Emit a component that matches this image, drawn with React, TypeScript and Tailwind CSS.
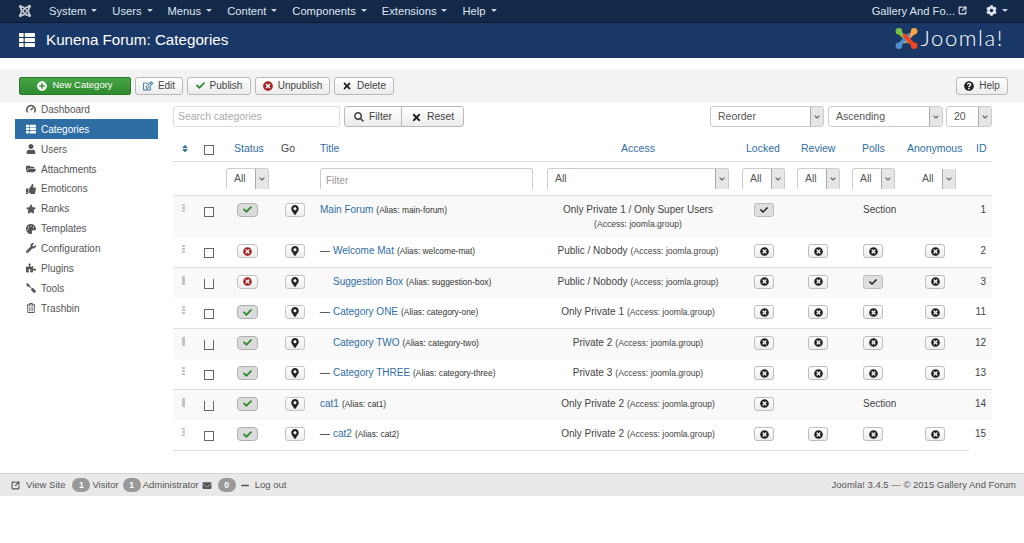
import React from "react";
import {
  FaJoomla,
  FaThList,
  FaRegEdit,
  FaCheck,
  FaTimesCircle,
  FaTimes,
  FaPlusCircle,
  FaSearch,
  FaQuestionCircle,
  FaCog,
  FaUser,
  FaFolderOpen,
  FaThumbsUp,
  FaStar,
  FaPalette,
  FaWrench,
  FaPuzzlePiece,
  FaScrewdriver,
  FaRegTrashAlt,
  FaSort,
  FaMapMarkerAlt,
  FaEnvelope,
  FaMinus,
  FaChevronDown,
} from "react-icons/fa";
import { Gauge, SquareArrowOutUpRight } from "lucide-react";

const menus = ["System", "Users", "Menus", "Content", "Components", "Extensions", "Help"];

const sideItems = [
  { name: "Categories", icon: FaThList, active: true },
  { name: "Users", icon: FaUser },
  { name: "Attachments", icon: FaFolderOpen },
  { name: "Emoticons", icon: FaThumbsUp },
  { name: "Ranks", icon: FaStar },
  { name: "Templates", icon: FaPalette },
  { name: "Configuration", icon: FaWrench },
  { name: "Plugins", icon: FaPuzzlePiece },
  { name: "Tools", icon: FaScrewdriver, flip: true },
  { name: "Trashbin", icon: FaRegTrashAlt },
];

type Row = {
  title: string;
  alias: string;
  dash?: boolean;
  indent?: boolean;
  status: "on" | "off";
  access: string;
  group: string;
  h: string;
  alt: boolean;
  clip?: boolean;
  section?: boolean;
  stack?: boolean;
  locked?: boolean;
  polls?: boolean;
  id: number;
  last?: boolean;
};

const rows: Row[] = [
  { title: "Main Forum", alias: "main-forum", status: "on", access: "Only Private 1 / Only Super Users", group: "joomla.group", h: "h-[42px]", alt: true, section: true, stack: true, locked: true, id: 1 },
  { title: "Welcome Mat", alias: "welcome-mat", dash: true, status: "off", access: "Public / Nobody", group: "joomla.group", h: "h-[30px]", alt: false, id: 2 },
  { title: "Suggestion Box", alias: "suggestion-box", indent: true, status: "off", access: "Public / Nobody", group: "joomla.group", h: "h-[31px]", alt: true, clip: true, polls: true, id: 3 },
  { title: "Category ONE", alias: "category-one", dash: true, status: "on", access: "Only Private 1", group: "joomla.group", h: "h-[30px]", alt: false, id: 11 },
  { title: "Category TWO", alias: "category-two", indent: true, status: "on", access: "Private 2", group: "joomla.group", h: "h-[31px]", alt: true, clip: true, id: 12 },
  { title: "Category THREE", alias: "category-three", dash: true, status: "on", access: "Private 3", group: "joomla.group", h: "h-[30px]", alt: false, id: 13 },
  { title: "cat1", alias: "cat1", status: "on", access: "Only Private 2", group: "joomla.group", h: "h-[31px]", alt: true, clip: true, section: true, id: 14 },
  { title: "cat2", alias: "cat2", dash: true, status: "on", access: "Only Private 2", group: "joomla.group", h: "h-[30px]", alt: false, last: true, id: 15 },
];

function JoomlaMark() {
  return (
    <svg viewBox="0 0 24 24" className="h-[23px] w-[23px]">
      <path d="M4 5 L14 15" stroke="#7ac143" strokeWidth="4.2" fill="none" strokeLinecap="round" />
      <circle cx="4" cy="4.5" r="3.4" fill="#7ac143" />
      <path d="M20 5 L10 15" stroke="#f9a541" strokeWidth="4.2" fill="none" strokeLinecap="round" />
      <circle cx="20" cy="4.5" r="3.4" fill="#f9a541" />
      <path d="M4 19.5 L14 9" stroke="#5091cd" strokeWidth="4.2" fill="none" strokeLinecap="round" />
      <circle cx="4" cy="19.5" r="3.4" fill="#5091cd" />
      <path d="M20 19.5 L10 9" stroke="#f44321" strokeWidth="4.2" fill="none" strokeLinecap="round" />
      <circle cx="20" cy="19.5" r="3.4" fill="#f44321" />
    </svg>
  );
}

function ToolButton({ icon, label, w }: { icon: React.ReactNode; label: string; w: string }) {
  return (
    <button className={`flex h-[18px] ${w} items-center justify-center gap-[5px] rounded-[3px] border border-[#b9b9b9] bg-gradient-to-b from-white to-[#ececec] text-[10px] text-[#444]`}>
      {icon}
      {label}
    </button>
  );
}

function Select({ label, w, arrow = "w-[13px]", open, flat }: { label: string; w: string; arrow?: string; open?: boolean; flat?: boolean }) {
  return (
    <div
      className={`flex ${w} overflow-hidden border-[#ccc] bg-white text-[10.5px] text-[#555] ${
        open ? "h-[21px] rounded-tl-[3px] rounded-tr-[3px] border-x border-t" : "h-[21px] rounded-[3px] border"
      } ${flat ? "border-l-transparent border-t-transparent" : ""}`}
    >
      <span className="flex flex-1 items-center pl-[7px] pt-px">{label}</span>
      <span className={`flex ${arrow} items-center justify-center border-l border-[#aaa] bg-[#e6e6e6]`}>
        <FaChevronDown className="h-[6px] w-[6px] text-[#555]" />
      </span>
    </div>
  );
}

function StatusButton({ kind }: { kind: Row["status"] }) {
  const bg = kind === "on" ? "bg-[#dcdcdc] border-[#b0b0b0]" : "bg-gradient-to-b from-white to-[#ececec] border-[#c0c0c0]";
  return (
    <span className={`flex h-[14px] w-[21px] items-center justify-center rounded-[4px] border ${bg}`}>
      {kind === "on" && <FaCheck className="h-[9px] w-[9px] text-[#2f8a2f]" />}
      {kind === "off" && <FaTimesCircle className="h-[9px] w-[9px] text-[#a52323]" />}
    </span>
  );
}

function SmallButton({ on }: { on?: boolean }) {
  return (
    <span
      className={`flex h-[14px] w-[20px] items-center justify-center rounded-[3px] border border-[#bdbdbd] ${
        on ? "bg-[#dedede]" : "bg-gradient-to-b from-white to-[#ececec]"
      }`}
    >
      {on ? <FaCheck className="h-[8px] w-[8px] text-[#222]" /> : <FaTimesCircle className="h-[9px] w-[9px] text-[#222]" />}
    </span>
  );
}

function Handle({ heavy }: { heavy?: boolean }) {
  return (
    <div className={`ml-[9px] mt-[8px] h-[9px] w-[3px] ${heavy ? "bg-[#c4c4c4]" : "bg-[repeating-linear-gradient(#c4c4c4_0_2px,transparent_2px,transparent_3px)]"}`} />
  );
}

export default function App() {
  return (
    <div className="min-h-[543px] bg-white font-['Liberation_Sans',Arial,sans-serif] text-[10px] text-[#555]">
      {/* top nav */}
      <nav className="flex h-[23px] items-center justify-between border-b border-[#0b1a30] bg-[#13294a] text-[11.2px] text-[#dfe5ee]">
        <div className="flex items-center">
          <FaJoomla className="ml-[18px] mr-[17px] h-[14px] w-[14px] text-[#c4c9d0]" />
          <div className="flex items-center gap-[15px]">
            {menus.map((m) => (
              <span key={m} className="flex items-center gap-[5px]">
                {m}
                <span className="h-0 w-0 border-x-[3px] border-t-[3px] border-x-transparent border-t-[#c9d0da]" />
              </span>
            ))}
          </div>
        </div>
        <div className="flex items-center">
          <span>Gallery And Fo...</span>
          <SquareArrowOutUpRight className="ml-[3px] h-[9px] w-[9px]" strokeWidth={3} />
          <FaCog className="ml-[19px] h-[11px] w-[11px]" />
          <span className="ml-[5px] mr-[16px] h-0 w-0 border-x-[3px] border-t-[3px] border-x-transparent border-t-[#c9d0da]" />
        </div>
      </nav>

      {/* title bar */}
      <header className="flex h-[35px] items-center justify-between bg-[#1a3867] text-white">
        <div className="flex items-center">
          <FaThList className="ml-[19px] h-[16px] w-[16px]" />
          <h1 className="ml-[11px] text-[15.2px]">Kunena Forum: Categories</h1>
        </div>
        <div className="mb-[5px] mr-[20px] flex items-center">
          <JoomlaMark />
          <span className="ml-[3px] font-['Lato',sans-serif] text-[22px] font-light leading-none tracking-[1.6px]">Joomla!</span>
        </div>
      </header>

      {/* toolbar */}
      <div className="mt-[11px] flex h-[33px] items-center justify-between bg-[#f3f3f3] pl-[19px] pr-[16px]">
        <div className="flex items-center gap-[4px]">
          <button className="flex h-[18px] w-[112px] items-center justify-center gap-[5px] rounded-[2px] border border-[#2b7a2b] bg-gradient-to-b from-[#46a546] to-[#2f8a2f] text-[9.5px] text-white">
            <FaPlusCircle className="h-[10px] w-[10px]" />
            New Category
          </button>
          <ToolButton w="w-[48px]" label="Edit" icon={<FaRegEdit className="h-[10px] w-[10px] text-[#2d6e8e]" />} />
          <ToolButton w="w-[64px]" label="Publish" icon={<FaCheck className="h-[9px] w-[9px] text-[#2f8a2f]" />} />
          <ToolButton w="w-[75px]" label="Unpublish" icon={<FaTimesCircle className="h-[10px] w-[10px] text-[#a52323]" />} />
          <ToolButton w="w-[60px]" label="Delete" icon={<FaTimes className="h-[10px] w-[10px] text-[#222]" />} />
        </div>
        <ToolButton w="w-[52px]" label="Help" icon={<FaQuestionCircle className="h-[10px] w-[10px] text-[#222]" />} />
      </div>

      <div className="flex h-[371px]">
        {/* sidebar */}
        <aside className="ml-[15px] w-[143px] text-[#555]">
          <div className="flex h-[17px] items-center pb-[3px] pl-[11px]">
            <Gauge className="h-[10px] w-[10px]" strokeWidth={3.5} />
            <span className="ml-[5px]">Dashboard</span>
          </div>
          {sideItems.map((item) => {
            const Icon = item.icon;
            return (
              <div key={item.name} className={`flex h-[19.85px] items-center pl-[11px] pt-[1px] ${item.active ? "bg-[#2f6ea5] text-white" : ""}`}>
                <Icon className={`h-[10px] w-[10px] ${item.flip ? "-scale-x-100" : ""}`} />
                <span className="ml-[5px]">{item.name}</span>
              </div>
            );
          })}
        </aside>

        {/* main */}
        <main className="ml-[15px] w-[819px]">
          <div className="mt-[4px] flex items-start justify-between">
            <div className="flex">
              <div className="flex h-[21px] w-[167px] items-center rounded-[3px] border border-[#ddd] pl-[4px] pt-px text-[10.4px] text-[#aaa]">Search categories</div>
              <div className="ml-[4px] flex h-[21px] overflow-hidden rounded-[3px] border border-[#b9b9b9] bg-gradient-to-b from-white to-[#ececec] text-[10.4px] text-[#444]">
                <span className="flex w-[57px] items-center justify-center gap-[5px] border-r border-[#b9b9b9] pt-px">
                  <FaSearch className="h-[10px] w-[10px]" />
                  Filter
                </span>
                <span className="flex w-[61px] items-center justify-center gap-[5px] pt-px">
                  <FaTimes className="h-[11px] w-[11px] text-[#222]" />
                  Reset
                </span>
              </div>
            </div>
            <div className="flex gap-[4px]">
              <Select label="Reorder" w="w-[114px]" />
              <Select label="Ascending" w="w-[115px]" />
              <div className="-ml-px"><Select label="20" w="w-[46px]" /></div>
            </div>
          </div>

          <table className="mt-[7px] w-[819px] table-fixed">
            <colgroup>
              <col className="w-[23px]" />
              <col className="w-[30px]" />
              <col className="w-[48px]" />
              <col className="w-[46px]" />
              <col className="w-[220px]" />
              <col className="w-[196px]" />
              <col className="w-[55px]" />
              <col className="w-[55px]" />
              <col className="w-[55px]" />
              <col className="w-[68px]" />
              <col className="w-[23px]" />
            </colgroup>
            <thead>
              <tr className="h-[27px] border-b border-[#ddd] text-[10.5px] text-[#2f6ea5] [&>th]:pt-[3px]">
                <th className="pl-[9px] text-left font-normal"><FaSort className="h-[9px] w-[6px] text-[#2f6ea5]" /></th>
                <th className="pl-[8px] text-left font-normal"><span className="mt-[2px] block h-[10px] w-[10px] border border-[#666]" /></th>
                <th className="pl-[8px] text-left font-normal">Status</th>
                <th className="pl-[7px] text-left font-normal text-[#444]">Go</th>
                <th className="text-left font-normal">Title</th>
                <th className="text-center font-normal">Access</th>
                <th className="pl-[10px] text-left font-normal">Locked</th>
                <th className="pl-[10px] text-left font-normal">Review</th>
                <th className="pl-[16px] text-left font-normal">Polls</th>
                <th className="pl-[6px] text-left font-normal">Anonymous</th>
                <th className="pl-[7px] text-left font-normal">ID</th>
              </tr>
            </thead>
            <tbody>
              <tr className="h-[34px] border-b border-[#ddd] align-top">
                <td colSpan={2} />
                <td className="pt-[6px]"><Select label="All" w="w-[43px]" open /></td>
                <td />
                <td className="pt-[6px]"><div className="h-[21px] w-[213px] rounded-t-[3px] border-x border-t border-[#ccc] pl-[5px] pt-[4px] text-[#999]">Filter</div></td>
                <td className="pl-[7px] pt-[6px]"><Select label="All" w="w-[182px]" open /></td>
                <td className="pl-[6px] pt-[6px]"><Select label="All" w="w-[43px]" open /></td>
                <td className="pl-[6px] pt-[6px]"><Select label="All" w="w-[43px]" open /></td>
                <td className="pl-[6px] pt-[6px]"><Select label="All" w="w-[43px]" open /></td>
                <td className="pl-[13px] pt-[6px]"><Select label="All" w="w-[42px]" open flat /></td>
                <td />
              </tr>
              {rows.map((r) => {
                const edge = r.last ? "border-b border-[#ddd]" : "";
                return (
                  <tr key={r.id} className={`${r.h} align-top ${r.alt ? "bg-[#f9f9f9]" : "bg-white"} ${r.clip ? "border-t border-[#ddd]" : ""}`}>
                    <td className={edge}><Handle heavy={r.clip} /></td>
                    <td className={`pl-[8px] ${edge}`}>
                      <span className={`mt-[11px] block h-[10px] w-[10px] border border-[#666] ${r.clip ? "border-t-0" : ""}`} />
                    </td>
                    <td className={`pl-[11px] pt-[7px] ${edge}`}><StatusButton kind={r.status} /></td>
                    <td className={`pl-[11px] pt-[7px] ${edge}`}>
                      <span className="flex h-[14px] w-[20px] items-center justify-center rounded-[3px] border border-[#c4c4c4] bg-gradient-to-b from-white to-[#ececec]">
                        <FaMapMarkerAlt className="h-[10px] w-[10px] text-[#222]" />
                      </span>
                    </td>
                    <td className={`whitespace-nowrap pt-[6px] ${edge}`}>
                      {r.dash && <span className="mr-[3px] text-[#333]">—</span>}
                      {r.indent && <span className="inline-block w-[13px]" />}
                      <span className="text-[#2f6ea5]">{r.title}</span>
                      <span className="ml-[3px] text-[8.4px] text-[#333]">(Alias: {r.alias})</span>
                    </td>
                    <td className={`whitespace-nowrap pt-[6px] text-center ${edge}`}>
                      <span className="text-[#444]">{r.access}</span>
                      {r.stack ? (
                        <span className="mt-[1px] block text-[8.6px] text-[#444]">(Access: {r.group})</span>
                      ) : (
                        <span className="ml-[3px] text-[8.6px] text-[#444]">(Access: {r.group})</span>
                      )}
                    </td>
                    <td className={`pl-[18px] pt-[7px] ${edge}`}><SmallButton on={r.locked} /></td>
                    <td className={`pl-[17px] pt-[7px] ${edge}`}>{!r.section && <SmallButton />}</td>
                    <td className={`pl-[17px] ${r.section ? "pt-[6px] text-[#444]" : "pt-[7px]"} ${edge}`}>
                      {r.section ? "Section" : <SmallButton on={r.polls} />}
                    </td>
                    <td className={`pl-[24px] pt-[7px] ${edge}`}>{!r.section && <SmallButton />}</td>
                    <td className="pr-[6px] pt-[6px] text-right text-[#444]">{r.id}</td>
                  </tr>
                );
              })}
            </tbody>
          </table>
        </main>
      </div>

      {/* footer */}
      <footer className="flex h-[23px] items-center justify-between border-t border-[#d4d4d4] bg-[#e9e9e9] pl-[11px] pr-[8px] text-[9.5px] text-[#555]">
        <div className="flex items-center">
          <SquareArrowOutUpRight className="h-[9px] w-[9px]" strokeWidth={3} />
          <span className="ml-[6px]">View Site</span>
          <span className="ml-[7px] flex h-[14px] w-[18px] items-center justify-center rounded-full bg-[#999] text-[8.6px] font-bold text-white">1</span>
          <span className="ml-[2px]">Visitor</span>
          <span className="ml-[4px] flex h-[14px] w-[18px] items-center justify-center rounded-full bg-[#999] text-[8.6px] font-bold text-white">1</span>
          <span className="ml-[2px]">Administrator</span>
          <FaEnvelope className="ml-[3px] h-[9px] w-[10px]" />
          <span className="ml-[6px] flex h-[14px] w-[18px] items-center justify-center rounded-full bg-[#999] text-[8.6px] font-bold text-white">0</span>
          <FaMinus className="ml-[4px] h-[9px] w-[10px]" />
          <span className="ml-[5px]">Log out</span>
        </div>
        <span>Joomla! 3.4.5 — © 2015 Gallery And Forum</span>
      </footer>
    </div>
  );
}
